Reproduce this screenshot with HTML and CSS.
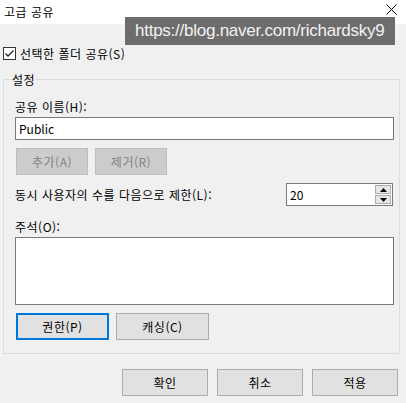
FILE: index.html
```html
<!DOCTYPE html>
<html lang="ko">
<head>
<meta charset="utf-8">
<title>고급 공유</title>
<link rel="stylesheet" href="styles.css">
</head>
<body>
<div class="window">
  <div class="titlebar">
    <span class="title">고급 공유</span>
    <svg class="close" width="11" height="11" viewBox="0 0 11 11"><path d="M0.5 0.5 L10.5 10.5 M10.5 0.5 L0.5 10.5" stroke="#000" stroke-width="1" fill="none"/></svg>
  </div>
  <div class="watermark">https://blog.naver.com/richardsky9</div>
  <div class="content">
    <div class="check-row">
      <svg class="checkbox" width="13" height="13" viewBox="0 0 13 13"><rect x="0.5" y="0.5" width="12" height="12" fill="#fff" stroke="#333"/><path d="M2.5 6.5 L5 9 L10.5 3.5" stroke="#222" stroke-width="1.3" fill="none"/></svg>
      <span>선택한 폴더 공유(S)</span>
    </div>
    <div class="group">
      <div class="legend">설정</div>
      <div class="label first">공유 이름(H):</div>
      <input class="field" type="text" value="Public">
      <div class="btn-row">
        <button class="btn small disabled">추가(A)</button>
        <button class="btn small disabled">제거(R)</button>
      </div>
      <div class="limit-row">
        <span>동시 사용자의 수를 다음으로 제한(L):</span>
        <div class="spinner">
          <span class="spin-value">20</span>
          <div class="spin-btns">
            <div class="spin-btn"><svg width="7" height="4" viewBox="0 0 7 4"><path d="M0 4 L3.5 0 L7 4 Z" fill="#000"/></svg></div>
            <div class="spin-btn"><svg width="7" height="4" viewBox="0 0 7 4"><path d="M0 0 L3.5 4 L7 0 Z" fill="#000"/></svg></div>
          </div>
        </div>
      </div>
      <div class="label comment">주석(O):</div>
      <textarea class="memo"></textarea>
      <div class="btn-row">
        <button class="btn mid focused">권한(P)</button>
        <button class="btn mid">캐싱(C)</button>
      </div>
    </div>
    <div class="footer">
      <button class="btn wide">확인</button>
      <button class="btn wide">취소</button>
      <button class="btn wide">적용</button>
    </div>
  </div>
</div>
</body>
</html>
```

FILE: styles.css
```css
* { box-sizing: border-box; }
html, body { margin: 0; padding: 0; }
body {
  width: 406px;
  height: 403px;
  overflow: hidden;
  background: #f0f0f0;
  font-family: "Noto Sans CJK KR", "Noto Sans", sans-serif;
  font-size: 12px;
  letter-spacing: 0.5px;
  color: #000;
}
.window {
  position: relative;
  width: 406px;
  height: 403px;
  background: #f0f0f0;
}
.titlebar {
  height: 24px;
  background: #fff;
  display: flex;
  align-items: center;
  justify-content: space-between;
  padding: 0 9px 0 4px;
}
.title { line-height: 17px; margin-top: -1px; }
.close { margin-top: -5px; }
.watermark {
  position: absolute;
  left: 125px;
  top: 17px;
  width: 270px;
  height: 28px;
  background: #6d6d6d;
  color: #f2f2f2;
  font-family: "Liberation Sans", Arial, sans-serif;
  font-size: 17px;
  letter-spacing: -0.25px;
  line-height: 28px;
  padding-left: 10px;
  white-space: nowrap;
}
.content {
  padding: 0 7px 0 3px;
}
.check-row {
  display: flex;
  align-items: center;
  height: 17px;
  margin-top: 21px;
  gap: 4px;
  line-height: 17px;
}
.checkbox { display: block; }
.group {
  margin-top: 17px;
  width: 397px;
  height: 275px;
  border: 1px solid #dcdcdc;
  padding: 0 5px 0 11px;
  display: flex;
  flex-direction: column;
  align-items: flex-start;
}
.legend {
  margin: -9px 0 0 -4px;
  padding: 0 1px;
  height: 17px;
  line-height: 17px;
  background: #f0f0f0;
}
.label { line-height: 17px; height: 17px; }
.label.first { margin-top: 10px; }
.label.comment { margin-top: 12px; }
.field {
  margin-top: 2px;
  width: 379px;
  height: 23px;
  border: 1px solid #7a7a7a;
  background: #fff;
  padding: 0 3px;
  font: inherit;
  letter-spacing: 0;
  color: #000;
  outline: none;
}
.btn-row {
  display: flex;
  gap: 7px;
  margin-top: 8px;
  margin-left: 1px;
}
.btn {
  height: 27px;
  border: 1px solid #adadad;
  background: #e1e1e1;
  font: inherit;
  letter-spacing: 0.5px;
  color: #000;
  padding: 0;
  line-height: 17px;
}
.btn.small { width: 72px; }
.btn.mid { width: 93px; }
.btn.wide { width: 86px; }
.btn.disabled {
  background: #cccccc;
  border-color: #bfbfbf;
  color: #838383;
}
.btn.focused {
  border: 2px solid #0078d7;
}
.limit-row {
  margin-top: 8px;
  width: 379px;
  display: flex;
  align-items: center;
  justify-content: space-between;
  line-height: 17px;
}
.spinner {
  width: 107px;
  height: 23px;
  margin-right: 1px;
  border: 1px solid #7a7a7a;
  background: #fff;
  display: flex;
  align-items: center;
  justify-content: space-between;
  padding: 0 1px 0 3px;
  letter-spacing: 0;
}
.spin-btns {
  display: flex;
  flex-direction: column;
  gap: 1px;
}
.spin-btn {
  width: 16px;
  height: 9px;
  border: 1px solid #adadad;
  background: #e6e6e6;
  display: flex;
  align-items: center;
  justify-content: center;
}
.spin-btn svg { display: block; }
.memo {
  margin-top: 2px;
  width: 379px;
  height: 68px;
  border: 1px solid #7a7a7a;
  background: #fff;
  resize: none;
  font: inherit;
  outline: none;
  padding: 2px 3px;
}
.footer {
  display: flex;
  justify-content: flex-end;
  gap: 9px;
  margin-top: 15px;
  margin-right: 1px;
}
```
